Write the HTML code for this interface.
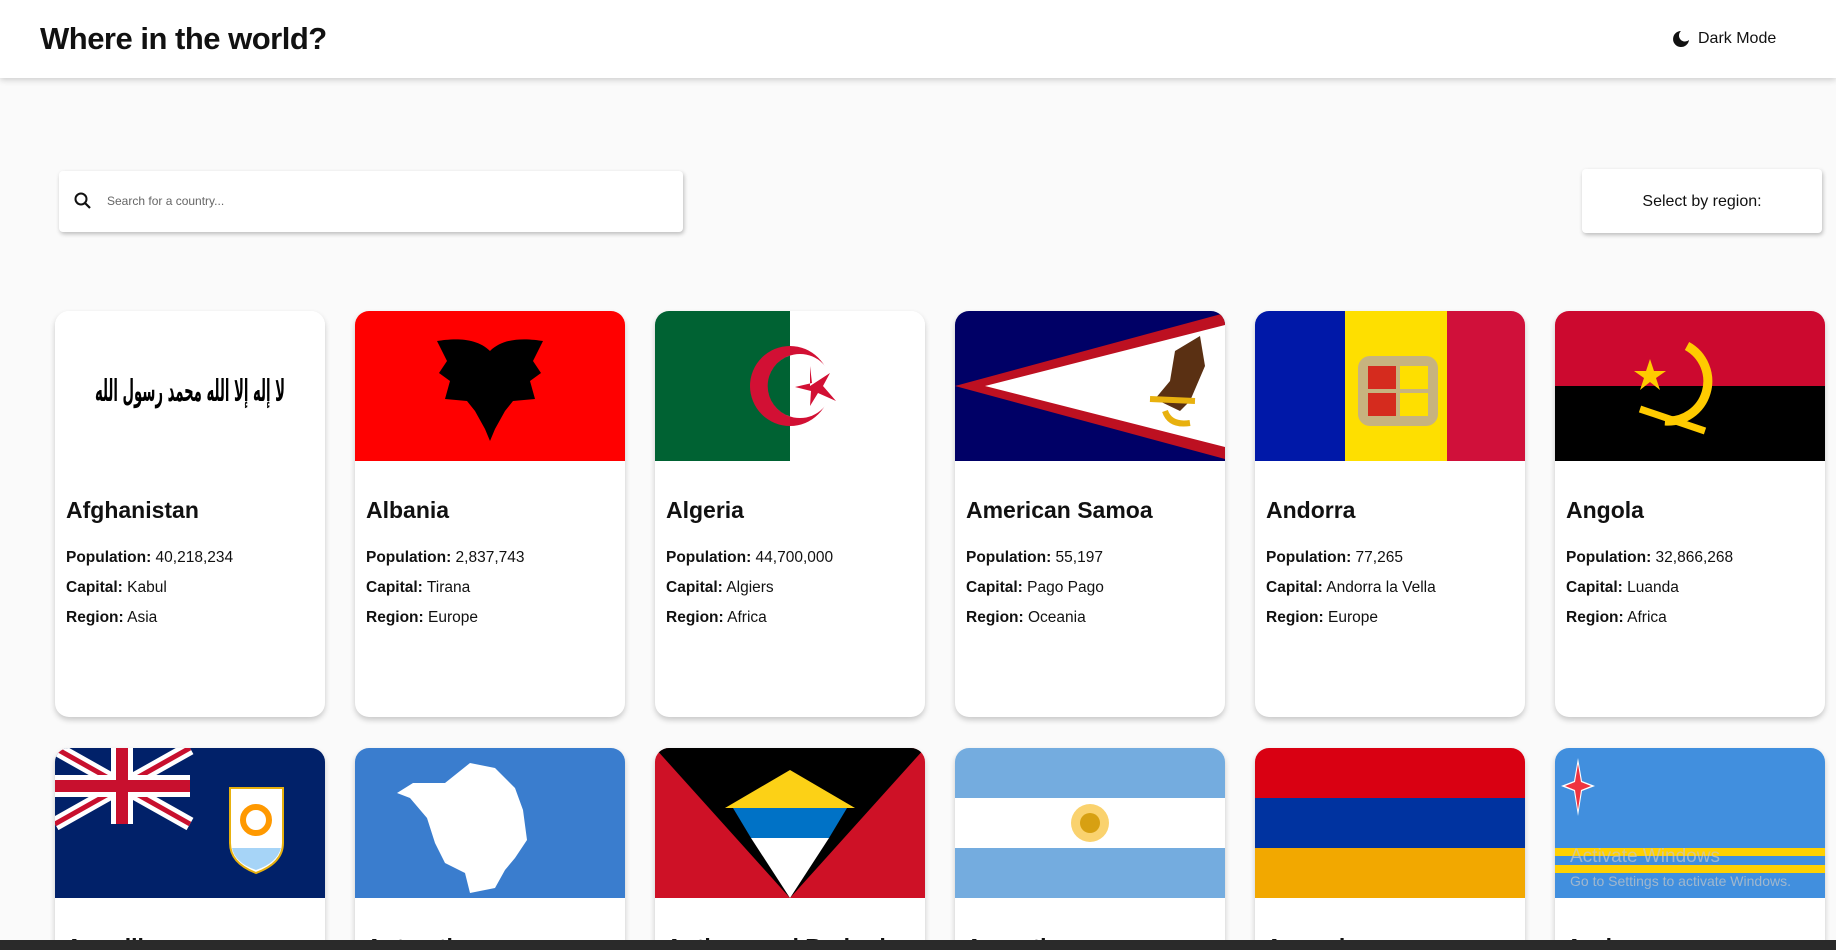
<!DOCTYPE html>
<html><head><meta charset="utf-8"><style>
*{margin:0;padding:0;box-sizing:border-box}
html{width:1836px;height:950px;overflow:hidden}
body{width:1836px;height:950px;overflow:hidden;background:#fafafa;font-family:"Liberation Sans",sans-serif;color:#111;position:relative}
.hdr{position:absolute;left:0;top:0;width:1836px;height:78px;background:#fff;box-shadow:0 2px 6px rgba(0,0,0,.18)}
.hdr h1{position:absolute;left:40px;top:21px;font-size:31px;font-weight:600;letter-spacing:-0.5px;color:#111}
.dm{position:absolute;left:1672px;top:30px;font-size:16px;display:flex;align-items:center;gap:8px}
.search{position:absolute;left:59px;top:171px;width:624px;height:61px;background:#fff;border-radius:4px;box-shadow:1px 2px 4px rgba(0,0,0,.25)}
.search span{position:absolute;left:48px;top:23px;font-size:12px;color:#666}
.search svg{position:absolute;left:14px;top:20px}
.sel{position:absolute;left:1582px;top:169px;width:240px;height:64px;background:#fff;border-radius:4px;box-shadow:1px 2px 4px rgba(0,0,0,.25);font-size:16px;text-align:center;line-height:66px}
.card{position:absolute;width:270px;height:406px;background:#fff;border-radius:14px;overflow:hidden;box-shadow:0 3px 6px rgba(0,0,0,.2)}
.r2{height:202px;border-radius:14px 14px 0 0}
.card svg{display:block}
.card h2{position:absolute;left:11px;top:186px;font-size:23px;font-weight:600}
.card p{position:absolute;left:11px;font-size:15.5px}
.card b{font-weight:700}
.tb{position:absolute;left:0;top:940px;width:1836px;height:10px;background:#2a2a2a}
.wm{position:absolute;left:1570px;color:rgba(200,200,200,.7)}
</style></head><body>
<div class="hdr"><h1>Where in the world?</h1>
<div class="dm"><svg width="18" height="18" viewBox="0 0 18 18"><path d="M9 1A8 8 0 1 0 17 10A6 6 0 0 1 9 1Z" fill="#111"/></svg>Dark Mode</div></div>
<div class="search"><svg width="20" height="20" viewBox="0 0 20 20"><circle cx="8" cy="8" r="5.5" fill="none" stroke="#111" stroke-width="2"/><path d="M12 12L17 17" stroke="#111" stroke-width="2.2"/></svg><span>Search for a country...</span></div>
<div class="sel">Select by region:</div>

<div class="card" style="left:55px;top:311px"><svg width="270" height="150" viewBox="0 0 270 150"><rect width="270" height="150" fill="#fff"/><text x="135" y="90" text-anchor="middle" direction="rtl" font-family="DejaVu Sans" font-weight="bold" font-size="30" fill="#000" textLength="190" lengthAdjust="spacingAndGlyphs">لا إله إلا الله محمد رسول الله</text></svg>
<h2>Afghanistan</h2><p style="top:238px"><b>Population:</b> 40,218,234</p><p style="top:268px"><b>Capital:</b> Kabul</p><p style="top:298px"><b>Region:</b> Asia</p></div>

<div class="card" style="left:355px;top:311px"><svg width="270" height="150" viewBox="0 0 270 150"><rect width="270" height="150" fill="#f00"/><path d="M135 40 C120 25 95 28 82 30 L92 50 L84 62 L95 70 L90 88 L112 90 L120 100 L130 118 L135 130 L140 118 L150 100 L158 90 L180 88 L175 70 L186 62 L178 50 L188 30 C175 28 150 25 135 40Z" fill="#000"/></svg>
<h2>Albania</h2><p style="top:238px"><b>Population:</b> 2,837,743</p><p style="top:268px"><b>Capital:</b> Tirana</p><p style="top:298px"><b>Region:</b> Europe</p></div>

<div class="card" style="left:655px;top:311px"><svg width="270" height="150" viewBox="0 0 270 150"><rect width="270" height="150" fill="#fff"/><rect width="135" height="150" fill="#006233"/><circle cx="135" cy="75" r="40" fill="#d21034"/><circle cx="145" cy="75" r="32" fill="#fff"/><path d="M145 75 A32 32 0 0 1 135 105.5 L135 44.5 A32 32 0 0 1 145 75Z" fill="#fff"/><path d="M135 44.5 A32 32 0 0 0 135 105.5Z" fill="#006233"/><polygon points="150,75 170,62 163,75 176,90 158,82 150,95 151,80 135,76 152,72 150,55" fill="#d21034" transform="translate(5,0)"/></svg>
<h2>Algeria</h2><p style="top:238px"><b>Population:</b> 44,700,000</p><p style="top:268px"><b>Capital:</b> Algiers</p><p style="top:298px"><b>Region:</b> Africa</p></div>

<div class="card" style="left:955px;top:311px"><svg width="270" height="150" viewBox="0 0 270 150"><rect width="270" height="150" fill="#000066"/><polygon points="270,2 0,75 270,148" fill="#bd1021"/><polygon points="270,14 30,75 270,136" fill="#fff"/><path d="M220 40 L245 25 L250 55 L235 90 L225 100 L200 88 L215 70Z" fill="#5a3013"/><path d="M195 88 L240 90 M210 100 Q215 115 235 112" stroke="#e8b10e" stroke-width="6" fill="none"/></svg>
<h2>American Samoa</h2><p style="top:238px"><b>Population:</b> 55,197</p><p style="top:268px"><b>Capital:</b> Pago Pago</p><p style="top:298px"><b>Region:</b> Oceania</p></div>

<div class="card" style="left:1255px;top:311px"><svg width="270" height="150" viewBox="0 0 270 150"><rect width="90" height="150" fill="#0018a8"/><rect x="90" width="102" height="150" fill="#fedf00"/><rect x="192" width="78" height="150" fill="#d0103a"/><rect x="103" y="45" width="80" height="70" rx="12" fill="#c7b37f"/><rect x="113" y="55" width="28" height="23" fill="#d52b1e"/><rect x="145" y="55" width="28" height="23" fill="#fedf00"/><rect x="113" y="82" width="28" height="23" fill="#d52b1e"/><rect x="145" y="82" width="28" height="23" fill="#fedf00"/></svg>
<h2>Andorra</h2><p style="top:238px"><b>Population:</b> 77,265</p><p style="top:268px"><b>Capital:</b> Andorra la Vella</p><p style="top:298px"><b>Region:</b> Europe</p></div>

<div class="card" style="left:1555px;top:311px"><svg width="270" height="150" viewBox="0 0 270 150"><rect width="270" height="75" fill="#cc092f"/><rect y="75" width="270" height="75" fill="#000"/><path d="M132 35 A40 40 0 0 1 110 110" stroke="#ffcb00" stroke-width="9" fill="none"/><path d="M85 98 L150 120" stroke="#ffcb00" stroke-width="7"/><polygon points="95,48 99,60 111,60 101,67 105,79 95,71 85,79 89,67 79,60 91,60" fill="#ffcb00"/></svg>
<h2>Angola</h2><p style="top:238px"><b>Population:</b> 32,866,268</p><p style="top:268px"><b>Capital:</b> Luanda</p><p style="top:298px"><b>Region:</b> Africa</p></div>

<div class="card r2" style="left:55px;top:748px"><svg width="270" height="150" viewBox="0 0 270 150"><rect width="270" height="150" fill="#012169"/><path d="M0 0L135 76M135 0L0 76" stroke="#fff" stroke-width="14"/><path d="M0 0L135 76M135 0L0 76" stroke="#c8102e" stroke-width="5"/><path d="M67 0V76M0 38H135" stroke="#fff" stroke-width="22"/><path d="M67 0V76M0 38H135" stroke="#c8102e" stroke-width="12"/><path d="M175 40 H228 V95 Q228 115 201 125 Q175 115 175 95Z" fill="#fff" stroke="#e8b10e" stroke-width="2"/><circle cx="201" cy="72" r="13" fill="none" stroke="#f90" stroke-width="6"/><path d="M177 100 H226 Q222 115 201 122 Q180 115 177 100Z" fill="#a6d4f7"/></svg>
<h2>Anguilla</h2></div>

<div class="card r2" style="left:355px;top:748px"><svg width="270" height="150" viewBox="0 0 270 150"><rect width="270" height="150" fill="#3a7dce"/><path d="M115 15 L140 20 L160 40 L168 62 L172 92 L160 110 L150 122 L140 140 L115 145 L110 125 L90 115 L80 95 L72 70 L55 50 L42 45 L58 35 L90 35Z" fill="#fff"/></svg>
<h2>Antarctica</h2></div>

<div class="card r2" style="left:655px;top:748px"><svg width="270" height="150" viewBox="0 0 270 150"><rect width="270" height="150" fill="#ce1126"/><polygon points="0,0 270,0 135,150" fill="#000"/><polygon points="70,60 135,22 200,60" fill="#fcd116"/><polygon points="78,60 192,60 174,90 96,90" fill="#0072c6"/><polygon points="96,90 174,90 135,150" fill="#fff"/></svg>
<h2>Antigua and Barbuda</h2></div>

<div class="card r2" style="left:955px;top:748px"><svg width="270" height="150" viewBox="0 0 270 150"><rect width="270" height="150" fill="#74acdf"/><rect y="50" width="270" height="50" fill="#fff"/><circle cx="135" cy="75" r="19" fill="#f6b40e" opacity=".6"/><circle cx="135" cy="75" r="10" fill="#d7a012"/></svg>
<h2>Argentina</h2></div>

<div class="card r2" style="left:1255px;top:748px"><svg width="270" height="150" viewBox="0 0 270 150"><rect width="270" height="50" fill="#d90012"/><rect y="50" width="270" height="50" fill="#0033a0"/><rect y="100" width="270" height="50" fill="#f2a800"/></svg>
<h2>Armenia</h2></div>

<div class="card r2" style="left:1555px;top:748px"><svg width="270" height="150" viewBox="0 0 270 150"><rect width="270" height="150" fill="#418fde"/><rect y="100" width="270" height="8" fill="#ffd100"/><rect y="117" width="270" height="8" fill="#ffd100"/><polygon points="23,10 27,33 40,38 27,43 23,68 19,43 6,38 19,33" fill="#fff"/><polygon points="23,16 26,34 36,38 26,42 23,62 20,42 10,38 20,34" fill="#ef3340"/></svg>
<h2>Aruba</h2></div>

<div class="wm" style="top:846px;font-size:19px">Activate Windows</div>
<div class="wm" style="top:873px;font-size:14px">Go to Settings to activate Windows.</div>
<div class="tb"></div>
</body></html>
